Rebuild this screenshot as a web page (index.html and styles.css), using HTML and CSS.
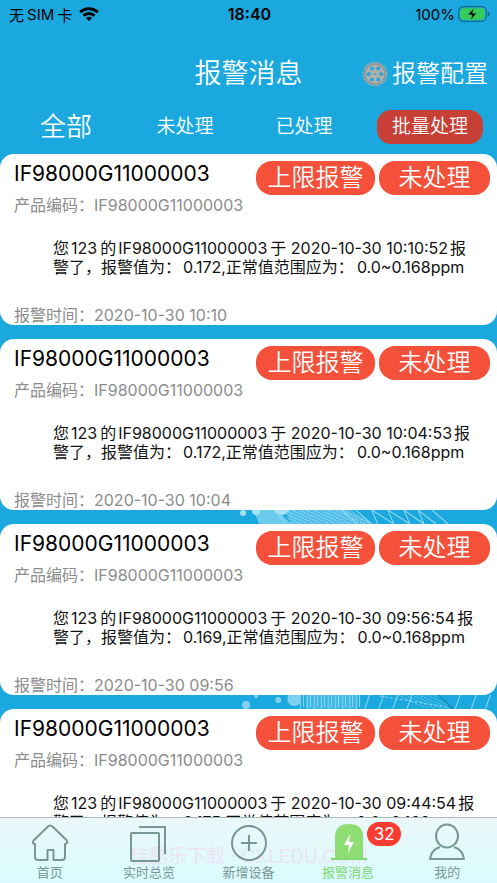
FILE: index.html
```
<!DOCTYPE html>
<html lang="zh-CN">
<head>
<meta charset="utf-8">
<meta name="viewport" content="width=device-width, initial-scale=1">
<title>报警消息</title>
<link rel="stylesheet" href="styles.css">
</head>
<body>
<div class="status">
  <div class="carrier"><span>无</span><span>SIM</span><span>卡</span>
    <svg class="wifi" viewBox="0 0 20 14" width="20" height="14" aria-hidden="true"><g fill="none" stroke="#000" stroke-width="3"><path d="M1.2 5.3C6.2.4 13.800.4 18.800 5.300"/><path d="M4.500 8.700C7.600 5.700 12.400 5.700 15.500 8.700"/></g><path d="M10 14 6.900 10.900Q10 8.500 13.100 10.900Z"/></svg>
  </div>
  <time class="clock">18:40</time>
  <div class="power"><span>100%</span>
    <svg viewBox="0 0 32 16" width="32" height="16" aria-hidden="true"><rect x=".7" y=".7" width="27.600" height="14.600" rx="4.500" fill="none" stroke="#116b87" stroke-width="1.200"/><rect x="2.300" y="2.300" width="24.400" height="11.400" rx="3" fill="#36cc5c"/><path d="M29.800 5.200v5.600q1.800-.8 1.800-2.800t-1.800-2.800z" fill="#116b87"/><path d="M16.500 1 9.500 9h4.300l-1.700 6 7-8h-4.300z" stroke="#36cc5c" stroke-width="1"/></svg>
  </div>
</div>
<header class="titlebar">
  <h1>报警消息</h1>
  <button class="config" type="button">
    <svg viewBox="0 0 26 26" width="26" height="26" aria-hidden="true">
      <circle cx="13" cy="13" r="11.800" fill="none" stroke="#a3a7a6" stroke-width="1.800" stroke-dasharray="1.500 1.589"/>
      <circle cx="13" cy="13" r="11" fill="#b1b0aa"/>
      <circle cx="13" cy="13" r="10" fill="none" stroke="#8b8882" stroke-width="1"/>
      <g fill="#2ba6d6"><circle cx="10" cy="7.500" r="2.100"/><circle cx="16.300" cy="7.600" r="2.100"/><circle cx="6.900" cy="13.200" r="2.100"/><circle cx="19.200" cy="13" r="2.100"/><circle cx="9.900" cy="18.500" r="2.100"/><circle cx="16.200" cy="18.500" r="2.100"/><circle cx="13" cy="13" r="1"/></g>
    </svg>
    <span>报警配置</span>
  </button>
</header>
<div class="filters">
  <button class="filter active" type="button">全部</button>
  <button class="filter" type="button">未处理</button>
  <button class="filter" type="button">已处理</button>
  <button class="filter batch" type="button"><span>批量处理</span></button>
</div>
<main class="list">
  <svg class="city" viewBox="0 0 267 200" preserveAspectRatio="none" aria-hidden="true">
    <defs>
      <pattern id="dots" width="3" height="3" patternUnits="userSpaceOnUse" patternTransform="rotate(25)"><rect width="2" height="1" fill="#a5e2f6"/></pattern>
      <pattern id="bars" width="7" height="20" patternUnits="userSpaceOnUse"><path d="M1 0v20M4 3v14" stroke="#9cdcf3"/></pattern>
    </defs>
    <path d="M24 0h24l14 14H30z" fill="#6bcbec"/>
    <path d="M52 0h64l32 14H62z" fill="url(#dots)"/>
    <path d="M56 0h66l20 14H62z" fill="#8cd6f1" opacity=".45"/>
    <g fill="#a7e3f7"><circle cx="14" cy="3" r="3"/><circle cx="27" cy="1" r="4"/><ellipse cx="52" cy="0" rx="7" ry="5"/></g>
    <g fill="none" stroke="#91d9f2" stroke-width="1"><path d="m48 2 8 12M112 0l16 14M126 0l16 14M142 0l6 14M142 0l22 14M158 0l6 14M158 0l22 14M174 0l6 14M174 0l20 14M188 0l6 14M188 0l18 14M202 0l16 14"/></g>
    <path d="M70 185h62v14H70z" fill="url(#bars)"/>
    <path d="M76 185h52v14H76z" fill="#7fd2ef" opacity=".35"/>
    <g fill="#7fd2ef"><circle cx="17" cy="195" r="4"/><circle cx="27" cy="186" r="2"/><circle cx="49" cy="190" r="3"/><circle cx="65" cy="189" r="7"/></g>
    <g fill="none" stroke="#8bd5ef" stroke-width="1"><path d="m140 185-5 14M154 185l-5 14M168 185l-5 14M182 185l-5 14M230 185l-5 14M246 185l-5 14M260 185l-5 14"/><path d="m150 186 66 11" stroke-dasharray="3 2"/></g>
    <path d="M166 185h44l12 14h-30z" fill="url(#dots)" opacity=".5"/><path d="m208 185 15 14" stroke="#126d9b"/>
  </svg>
  <article class="card">
    <div class="top"><h2>IF98000G11000003</h2><span class="tag wide">上限报警</span><button class="tag" type="button">未处理</button></div>
    <p class="meta">产品编码：<span>IF98000G11000003</span></p>
    <p class="text">您<span>123</span>的<span>IF98000G11000003</span>于 2020-10-30 10:10:52<span>报</span><br>警了，报警值为：<span>0.172,正常值范围应为：</span>0.0~0.168ppm</p>
    <p class="meta">报警时间：<time>2020-10-30 10:10</time></p>
  </article>
  <article class="card">
    <div class="top"><h2>IF98000G11000003</h2><span class="tag wide">上限报警</span><button class="tag" type="button">未处理</button></div>
    <p class="meta">产品编码：<span>IF98000G11000003</span></p>
    <p class="text">您<span>123</span>的<span>IF98000G11000003</span>于 2020-10-30 10:04:53<span>报</span><br>警了，报警值为：<span>0.172,正常值范围应为：</span>0.0~0.168ppm</p>
    <p class="meta">报警时间：<time>2020-10-30 10:04</time></p>
  </article>
  <article class="card">
    <div class="top"><h2>IF98000G11000003</h2><span class="tag wide">上限报警</span><button class="tag" type="button">未处理</button></div>
    <p class="meta">产品编码：<span>IF98000G11000003</span></p>
    <p class="text">您<span>123</span>的<span>IF98000G11000003</span>于 2020-10-30 09:56:54<span>报</span><br>警了，报警值为：<span>0.169,正常值范围应为：</span>0.0~0.168ppm</p>
    <p class="meta">报警时间：<time>2020-10-30 09:56</time></p>
  </article>
  <article class="card">
    <div class="top"><h2>IF98000G11000003</h2><span class="tag wide">上限报警</span><button class="tag" type="button">未处理</button></div>
    <p class="meta">产品编码：<span>IF98000G11000003</span></p>
    <p class="text">您<span>123</span>的<span>IF98000G11000003</span>于 2020-10-30 09:44:54<span>报</span><br>警了，报警值为：<span>0.175,正常值范围应为：</span>0.0~0.168ppm</p>
  </article>
</main>
<nav class="tabbar">
  <span class="mark">佳酷乐下载 · CXLEDU.COM</span>
  <a class="tab" href="#home"><svg viewBox="0 0 40 40" width="40" height="40" aria-hidden="true"><path d="M20 3.500 Q21.500 3.500 23 5L36.500 18Q38.500 20.500 35.500 22H35V35Q35 38 32 38H23.500V28H17.500V38H8Q5 38 5 35V22Q1.500 21.500 3.500 18.500L17.500 5Q18.500 3.500 20 3.500Z"/></svg><span>首页</span></a>
  <a class="tab" href="#live"><svg viewBox="0 0 40 40" width="40" height="40" aria-hidden="true"><rect x="2" y="11" width="28" height="28" rx="1"/><path d="M10 5H36V32"/></svg><span>实时总览</span></a>
  <a class="tab" href="#add"><svg viewBox="0 0 40 40" width="40" height="40" aria-hidden="true"><circle cx="21" cy="21" r="17"/><path d="M21 13v16M13 21h16"/></svg><span>新增设备</span></a>
  <a class="tab on" href="#alarm"><svg viewBox="0 0 40 40" width="40" height="40" aria-hidden="true"><path class="solid" d="M7 37V15Q7 2 21 2T35 15V37Z"/><path class="bolt" d="m22 12-6 11h5l-1 8 6-11h-5z"/><path d="M3 37H39"/></svg><span>报警消息</span><b class="badge">32</b></a>
  <a class="tab" href="#me"><svg viewBox="0 0 40 40" width="40" height="40" aria-hidden="true"><ellipse cx="20" cy="14" rx="11" ry="11.500"/><path d="M13 25Q4 28 3 37H37Q36 28 27 25"/></svg><span>我的</span></a>
</nav>
</body>
</html>
```
FILE: styles.css
```
* { box-sizing: border-box; }
body {
  margin: 0;
  height: 100vh;
  display: flex;
  flex-direction: column;
  overflow: hidden;
  background: #1aa8de;
  color: #111;
  font-family: Inter, "Noto Sans CJK SC", sans-serif;
}
h1, h2, p { margin: 0; font-weight: 400; }
button { border: 0; padding: 0; background: none; color: inherit; font: inherit; }
.status {
  display: grid;
  grid-template-columns: 1fr auto 1fr;
  align-items: center;
  height: 28px;
  padding: 0 7px 0 9px;
  font-size: 15px;
  color: #000;
}
.carrier { display: flex; align-items: center; gap: 3px; }
.wifi { margin-left: 4px; }
.clock { font-size: 16px; font-weight: 600; }
.power { display: flex; justify-content: flex-end; align-items: center; gap: 3px; }
.titlebar {
  display: grid;
  grid-template-columns: 1fr auto 1fr;
  align-items: center;
  height: 73px;
  padding: 18px 9px 0;
  color: #fff;
}
.titlebar h1 { grid-column: 2; font-size: 27px; line-height: 36px; font-weight: 350; }
.config { display: flex; align-items: center; justify-content: flex-end; gap: 4px; font-size: 24px; line-height: 36px; font-weight: 350; }
.filters {
  display: grid;
  grid-template-columns: 132fr 106fr 132fr 127fr;
  align-items: center;
  height: 53px;
  padding-bottom: 2px;
  color: #fff;
}
.filter { font-size: 19px; line-height: 34px; font-weight: 350; }
.filter.active { font-size: 26px; }
.batch span { display: block; margin: 0 14px 0 7px; background: #c84035; border-radius: 14px; }
.list { position: relative; flex: 1; min-height: 0; overflow: hidden; display: flex; flex-direction: column; gap: 14px; }
.city { position: absolute; right: 0; top: 356px; width: 54%; height: 200px; }
.card {
  position: relative;
  flex: none;
  min-height: 171px;
  padding: 7px 7px 0 14px;
  border-radius: 14px;
  background: #fff;
}
.top { display: flex; gap: 4px; }
.top h2 { flex: 1; font-size: 21px; line-height: 26px; color: #000; }
.tag { width: 111px; height: 34px; border-radius: 16px; background: #f4503a; color: #fff; font-size: 24px; line-height: 34px; font-weight: 350; text-align: center; }
.wide { width: 119px; }
.meta { font-size: 16px; line-height: 20px; color: #8c8c8c; }
.text { margin: 24px 0 28px 39px; font-size: 16px; line-height: 19px; white-space: nowrap; }
.text span { margin: 0 3px 0 2px; }
.tabbar {
  position: relative;
  flex: none;
  display: grid;
  grid-template-columns: repeat(5, 1fr);
  height: 66px;
  border-top: 1px solid #a9b7ba;
  background: linear-gradient(#ebf8f8, #d9fbff);
}
.tab { position: relative; display: flex; flex-direction: column; align-items: center; padding-top: 4px; color: #779696; font-size: 13px; line-height: 20px; text-decoration: none; }
.tab svg { fill: none; stroke: currentColor; stroke-width: 2; stroke-linejoin: round; }
.on { color: #80d875; }
.tab .solid { fill: #8ede73; stroke: none; }
.tab .bolt { fill: #fff; stroke: none; }
.badge { position: absolute; left: 69px; top: 4px; width: 34px; height: 24px; border-radius: 12px; background: #fd3b30; color: #fff; font-size: 17px; line-height: 24px; font-weight: 400; text-align: center; }
.mark { position: absolute; left: 130px; top: 26px; font-size: 19px; line-height: 26px; color: #ebe2f4; pointer-events: none; white-space: nowrap; }
```
